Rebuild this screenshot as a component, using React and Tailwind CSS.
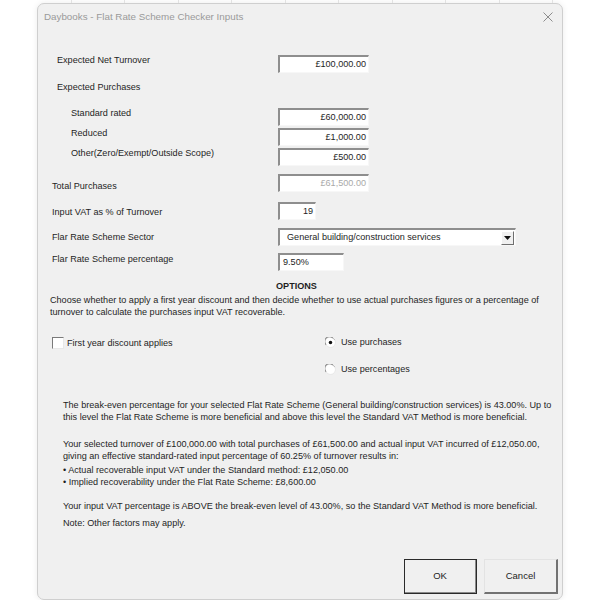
import React from "react";

function Field({ w, children, right = true, dim = false }) {
  return (
    <div
      className={`${w} h-[18px] shrink-0 bg-white border-t-2 border-l-2 border-r border-b border-t-[#8e8e8e] border-l-[#8e8e8e] border-r-[#f7f7f7] border-b-[#f7f7f7] flex items-center ${right ? "justify-end pr-[2px]" : "pl-[3px]"} ${dim ? "text-[#a9a9a9]" : "text-[#1e1e1e]"} leading-none whitespace-nowrap`}
    >
      {children}
    </div>
  );
}

function Radio({ checked }) {
  return (
    <svg width="11" height="11" viewBox="0 0 12 12" className="shrink-0">
      <circle cx="6" cy="6" r="5.5" fill="#ffffff" />
      <path d="M1.2 8.5 A5 5 0 0 1 8.5 1.2" fill="none" stroke="#8a8a8a" strokeWidth="1.2" />
      <path d="M8.5 1.2 A5 5 0 0 1 10.8 3.5" fill="none" stroke="#b5b5b5" strokeWidth="1" />
      <path d="M10.8 3.5 A5 5 0 0 1 1.2 8.5" fill="none" stroke="#e6e6e6" strokeWidth="1" />
      {checked && <circle cx="6" cy="6" r="1.9" fill="#111111" />}
    </svg>
  );
}

export default function App() {
  const gridCols = [0, 1, 2, 3, 4, 5, 6, 7, 8, 9, 10];
  return (
    <div className="w-[600px] h-[600px] bg-white overflow-hidden font-['Liberation_Sans',Arial,sans-serif] text-[#1e1e1e]">
      <div className="h-[3px] flex pl-[18px]">
        {gridCols.map((i) => (
          <div key={i} className="w-[53.5px] h-[3px] border-r border-[#e2e2e2] shrink-0" />
        ))}
      </div>
      <div className="ml-[37px] w-[526px] h-[597px] rounded-[7px] border border-[#cfcfcf] bg-[#f0f0f0] shadow-[0_0_6px_rgba(0,0,0,0.08)] flex flex-col">
        {/* title bar */}
        <div className="h-[25px] flex items-center justify-between pl-[6px] pr-[9px] text-[9.8px] text-[#9a9a9a]">
          <span className="mt-[1px]">Daybooks - Flat Rate Scheme Checker Inputs</span>
          <svg width="10" height="10" viewBox="0 0 10 10" className="mt-[1px]">
            <path d="M0.5 0.5 L9.5 9.5 M9.5 0.5 L0.5 9.5" stroke="#8c8c8c" strokeWidth="1" />
          </svg>
        </div>

        {/* body */}
        <div className="flex flex-col text-[9.1px]">
          <div className="mt-[26px] flex h-[18px] items-start">
            <div className="w-[240px] pl-[19px] -mt-px leading-[12px]">Expected Net Turnover</div>
            <Field w="w-[91px]">£100,000.00</Field>
          </div>

          <div className="mt-[8px] h-[12px] leading-[12px] pl-[19px]">Expected Purchases</div>

          <div className="mt-[15px] flex h-[18px] items-start">
            <div className="w-[240px] pl-[33px] -mt-px leading-[12px]">Standard rated</div>
            <Field w="w-[91px]">£60,000.00</Field>
          </div>
          <div className="mt-[2px] flex h-[18px] items-start">
            <div className="w-[240px] pl-[33px] -mt-px leading-[12px]">Reduced</div>
            <Field w="w-[91px]">£1,000.00</Field>
          </div>
          <div className="mt-[2px] flex h-[18px] items-start">
            <div className="w-[240px] pl-[33px] -mt-px leading-[12px]">Other(Zero/Exempt/Outside Scope)</div>
            <Field w="w-[91px]">£500.00</Field>
          </div>

          <div className="mt-[8px] flex h-[18px] items-start">
            <div className="w-[240px] pl-[14px] mt-[6px] leading-[12px]">Total Purchases</div>
            <Field w="w-[91px]" dim>£61,500.00</Field>
          </div>

          <div className="mt-[10px] flex h-[18px] items-start">
            <div className="w-[240px] pl-[14px] mt-[4px] leading-[12px]">Input VAT as % of Turnover</div>
            <Field w="w-[38px]">19</Field>
          </div>

          <div className="mt-[8px] flex h-[18px] items-start">
            <div className="w-[240px] pl-[14px] mt-[3px] leading-[12px]">Flar Rate Scheme Sector</div>
            <div className="w-[238px] h-[18px] bg-white border-t-2 border-l-2 border-r border-b border-t-[#8e8e8e] border-l-[#8e8e8e] border-r-[#f7f7f7] border-b-[#f7f7f7] flex items-center justify-between pl-[7px] pr-[1px]">
              <span className="leading-none whitespace-nowrap">General building/construction services</span>
              <div className="w-[13px] h-[14px] bg-[#f0f0f0] border-t border-l border-t-white border-l-white border-r border-b border-r-[#6f6f6f] border-b-[#6f6f6f] flex items-center justify-center">
                <svg width="7" height="4" viewBox="0 0 7 4">
                  <path d="M0 0 L7 0 L3.5 4 Z" fill="#111111" />
                </svg>
              </div>
            </div>
          </div>

          <div className="mt-[7px] flex h-[18px] items-start">
            <div className="w-[240px] pl-[14px] mt-0 leading-[12px]">Flar Rate Scheme percentage</div>
            <Field w="w-[66px]" right={false}>9.50%</Field>
          </div>

          <div className="mt-[9px] h-[12px] leading-[12px] pl-[238px] font-bold">OPTIONS</div>

          <div className="mt-[2px] pl-[12px] leading-[12px] whitespace-nowrap">
            Choose whether to apply a first year discount and then decide whether to use actual purchases figures or a percentage of
            <br />
            turnover to calculate the purchases input VAT recoverable.
          </div>

          <div className="mt-[18px] flex h-[14px] items-center">
            <div className="w-[287px] pl-[14px] flex items-center gap-[3px]">
              <div className="w-[12px] h-[12px] bg-white border-t border-l border-t-[#7a7a7a] border-l-[#7a7a7a] border-r border-b border-r-[#e8e8e8] border-b-[#e8e8e8]" />
              <span className="leading-[12px]">First year discount applies</span>
            </div>
            <div className="flex items-center gap-[5px] -mt-[2px]">
              <Radio checked />
              <span className="leading-[12px]">Use purchases</span>
            </div>
          </div>
          <div className="mt-[12px] flex h-[14px] items-center pl-[287px]">
            <div className="flex items-center gap-[5px]">
              <Radio />
              <span className="leading-[12px]">Use percentages</span>
            </div>
          </div>

          <div className="mt-[23px] pl-[25px] leading-[12px] whitespace-nowrap">
            The break-even percentage for your selected Flat Rate Scheme (General building/construction services) is 43.00%. Up to
            <br />
            this level the Flat Rate Scheme is more beneficial and above this level the Standard VAT Method is more beneficial.
          </div>
          <div className="mt-[15px] pl-[25px] leading-[12px] whitespace-nowrap">
            Your selected turnover of £100,000.00 with total purchases of £61,500.00 and actual input VAT incurred of £12,050.00,
            <br />
            giving an effective standard-rated input percentage of 60.25% of turnover results in:
          </div>
          <div className="mt-[2px] pl-[25px] leading-[12px] whitespace-nowrap">
            • Actual recoverable input VAT under the Standard method: £12,050.00
            <br />
            • Implied recoverability under the Flat Rate Scheme: £8,600.00
          </div>
          <div className="mt-[12px] pl-[25px] leading-[12px] whitespace-nowrap">
            Your input VAT percentage is ABOVE the break-even level of 43.00%, so the Standard VAT Method is more beneficial.
          </div>
          <div className="mt-[5px] pl-[25px] leading-[12px] whitespace-nowrap">Note: Other factors may apply.</div>

          <div className="mt-[30px] flex justify-end gap-[7px] pr-[4px] text-[9.5px]">
            <div className="w-[73px] h-[35px] bg-[#f0f0f0] border border-[#2a2a2a] flex items-center justify-center">
              <div className="w-full h-full border-r border-b border-r-[#8a8a8a] border-b-[#8a8a8a] flex items-center justify-center">OK</div>
            </div>
            <div className="w-[74px] h-[35px] bg-[#f0f0f0] border-t border-l border-t-[#e3e3e3] border-l-[#e3e3e3] border-r-2 border-b-2 border-r-[#727272] border-b-[#727272] flex items-center justify-center">
              Cancel
            </div>
          </div>
        </div>
      </div>
    </div>
  );
}
